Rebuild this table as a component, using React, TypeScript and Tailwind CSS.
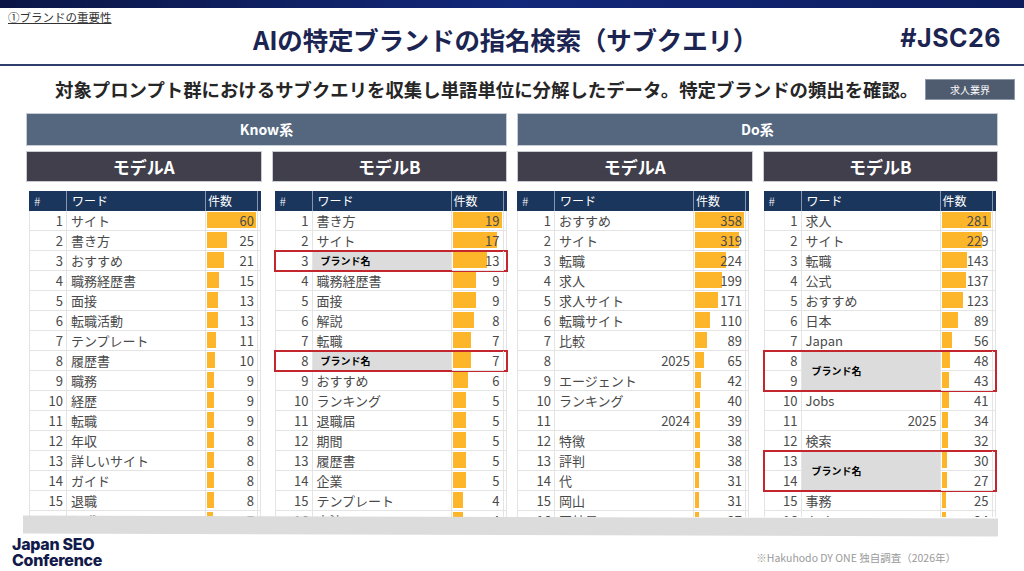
import React from 'react';

type Row = { n: number; w: string; v: number; kind?: 'num' | 'brand' | 'brand2' | 'skip' };

interface TableData {
  max: number;
  rows: Row[];
}

const knowA: TableData = {
  max: 60,
  rows: [
    { n: 1, w: 'サイト', v: 60 },
    { n: 2, w: '書き方', v: 25 },
    { n: 3, w: 'おすすめ', v: 21 },
    { n: 4, w: '職務経歴書', v: 15 },
    { n: 5, w: '面接', v: 13 },
    { n: 6, w: '転職活動', v: 13 },
    { n: 7, w: 'テンプレート', v: 11 },
    { n: 8, w: '履歴書', v: 10 },
    { n: 9, w: '職務', v: 9 },
    { n: 10, w: '経歴', v: 9 },
    { n: 11, w: '転職', v: 9 },
    { n: 12, w: '年収', v: 8 },
    { n: 13, w: '詳しいサイト', v: 8 },
    { n: 14, w: 'ガイド', v: 8 },
    { n: 15, w: '退職', v: 8 },
    { n: 16, w: '退職願', v: 7 },
  ],
};

const knowB: TableData = {
  max: 19,
  rows: [
    { n: 1, w: '書き方', v: 19 },
    { n: 2, w: 'サイト', v: 17 },
    { n: 3, w: 'ブランド名', v: 13, kind: 'brand' },
    { n: 4, w: '職務経歴書', v: 9 },
    { n: 5, w: '面接', v: 9 },
    { n: 6, w: '解説', v: 8 },
    { n: 7, w: '転職', v: 7 },
    { n: 8, w: 'ブランド名', v: 7, kind: 'brand' },
    { n: 9, w: 'おすすめ', v: 6 },
    { n: 10, w: 'ランキング', v: 5 },
    { n: 11, w: '退職届', v: 5 },
    { n: 12, w: '期間', v: 5 },
    { n: 13, w: '履歴書', v: 5 },
    { n: 14, w: '企業', v: 5 },
    { n: 15, w: 'テンプレート', v: 4 },
    { n: 16, w: '方法', v: 4 },
  ],
};

const doA: TableData = {
  max: 358,
  rows: [
    { n: 1, w: 'おすすめ', v: 358 },
    { n: 2, w: 'サイト', v: 319 },
    { n: 3, w: '転職', v: 224 },
    { n: 4, w: '求人', v: 199 },
    { n: 5, w: '求人サイト', v: 171 },
    { n: 6, w: '転職サイト', v: 110 },
    { n: 7, w: '比較', v: 89 },
    { n: 8, w: '2025', v: 65, kind: 'num' },
    { n: 9, w: 'エージェント', v: 42 },
    { n: 10, w: 'ランキング', v: 40 },
    { n: 11, w: '2024', v: 39, kind: 'num' },
    { n: 12, w: '特徴', v: 38 },
    { n: 13, w: '評判', v: 38 },
    { n: 14, w: '代', v: 31 },
    { n: 15, w: '岡山', v: 31 },
    { n: 16, w: '正社員', v: 27 },
  ],
};

const doB: TableData = {
  max: 281,
  rows: [
    { n: 1, w: '求人', v: 281 },
    { n: 2, w: 'サイト', v: 229 },
    { n: 3, w: '転職', v: 143 },
    { n: 4, w: '公式', v: 137 },
    { n: 5, w: 'おすすめ', v: 123 },
    { n: 6, w: '日本', v: 89 },
    { n: 7, w: 'Japan', v: 56 },
    { n: 8, w: 'ブランド名', v: 48, kind: 'brand2' },
    { n: 9, w: '', v: 43, kind: 'skip' },
    { n: 10, w: 'Jobs', v: 41 },
    { n: 11, w: '2025', v: 34, kind: 'num' },
    { n: 12, w: '検索', v: 32 },
    { n: 13, w: 'ブランド名', v: 30, kind: 'brand2' },
    { n: 14, w: '', v: 27, kind: 'skip' },
    { n: 15, w: '事務', v: 25 },
    { n: 16, w: 'doda', v: 24 },
  ],
};

function NumCell({ n }: { n: number }) {
  return (
    <div className="w-[38px] h-[20px] border-l border-r border-b border-[#e4e4e4] flex items-center justify-end pr-[3px]">
      {n}
    </div>
  );
}

function CountCell({ v, max }: { v: number; max: number }) {
  return (
    <div className="relative w-[52px] h-[20px] border-r border-b border-[#e4e4e4] flex items-center justify-end pr-[3px]">
      <div
        className="absolute left-[1px] top-[1px] bottom-[2px] bg-[#fdb62a]"
        style={{ width: `${Math.max(4, Math.round((v / max) * 49))}px` }}
      />
      <span className="relative">{v}</span>
    </div>
  );
}

function EndCell() {
  return <div className="w-[3px] h-[20px] border-r border-b border-[#e4e4e4]" />;
}

function DataTable({ data }: { data: TableData }) {
  const out: React.ReactNode[] = [];
  data.rows.forEach((r, i) => {
    if (r.kind === 'skip') return;
    if (r.kind === 'brand2') {
      const r2 = data.rows[i + 1];
      out.push(
        <div key={r.n} className="relative z-10 flex h-[40px] outline-2 outline-[#c3262c] -outline-offset-1">
          <div className="flex flex-col">
            <NumCell n={r.n} />
            <NumCell n={r2.n} />
          </div>
          <div className="w-[139px] h-[40px] bg-[#dcdcdc] border-r border-b border-[#e4e4e4] flex items-center pl-[10px] text-[10px] font-bold text-black">
            {r.w}
          </div>
          <div className="flex flex-col">
            <CountCell v={r.v} max={data.max} />
            <CountCell v={r2.v} max={data.max} />
          </div>
          <div className="flex flex-col">
            <EndCell />
            <EndCell />
          </div>
        </div>
      );
      return;
    }
    const brand = r.kind === 'brand';
    out.push(
      <div
        key={r.n}
        className={`flex h-[20px] ${brand ? 'relative z-10 outline-2 outline-[#c3262c] -outline-offset-1' : ''}`}
      >
        <NumCell n={r.n} />
        <div
          className={`w-[139px] h-[20px] border-r border-b border-[#e4e4e4] flex items-center ${
            brand
              ? 'bg-[#dcdcdc] pl-[8px] text-[10px] font-bold text-black'
              : r.kind === 'num'
              ? 'justify-end pr-[3px]'
              : 'pl-[4px]'
          }`}
        >
          {r.w}
        </div>
        <CountCell v={r.v} max={data.max} />
        <EndCell />
      </div>
    );
  });

  return (
    <div className="w-[232px] text-[13px] leading-none text-[#4a4a4a]">
      <div className="flex h-[20px] bg-[#1b365d] text-white text-[12px]">
        <div className="w-[38px] pl-[5px] border-r border-[#8597b0] flex items-center font-light">#</div>
        <div className="w-[139px] pl-[5px] border-r border-[#8597b0] flex items-center">ワード</div>
        <div className="w-[52px] pl-[2px] border-r border-[#8597b0] flex items-center">件数</div>
        <div className="w-[3px]" />
      </div>
      {out}
    </div>
  );
}

function ModelHeader({ label }: { label: string }) {
  return (
    <div className="h-[31px] bg-[#413f4c] border border-[#c9ccd3] flex items-center justify-center text-white text-[17px] font-bold">
      {label}
    </div>
  );
}

export default function App() {
  const columns = [
    { label: 'モデルA', data: knowA, pad: 'pl-[3px]' },
    { label: 'モデルB', data: knowB, pad: 'pl-[3px]' },
    { label: 'モデルA', data: doA, pad: 'pl-[0px]' },
    { label: 'モデルB', data: doB, pad: 'pl-[1px]' },
  ];

  return (
    <div className="w-[1024px] h-[571px] overflow-hidden bg-white font-['Noto_Sans_CJK_JP','Noto_Sans',sans-serif]">
      {/* Top strip */}
      <div className="h-[8px] bg-linear-to-r from-[#0b1646] via-[#12287a] to-[#0d1d5e]" />

      {/* Title block */}
      <div className="h-[56px]">
        <div className="pl-[8px] pt-[3px] text-[11.5px] leading-[13px] text-[#333] underline">①ブランドの重要性</div>
        <div className="flex items-center justify-between pl-[253px] pr-[23px] h-[30px]">
          <h1 className="text-[25.5px] font-bold text-[#1c2452] tracking-[-0.2px]">AIの特定ブランドの指名検索（サブクエリ）</h1>
          <div className="text-[25px] font-bold text-[#1c2452] font-['Inter',sans-serif] tracking-[0.5px]">#JSC26</div>
        </div>
      </div>
      <div className="h-[2px] bg-[#2f3d6a]" />

      {/* Subtitle */}
      <div className="h-[47px] flex items-center justify-between pl-[55px] pr-[9px]">
        <p className="whitespace-nowrap text-[18.4px] font-bold text-[#262626]">
          対象プロンプト群におけるサブクエリを収集し単語単位に分解したデータ。特定ブランドの頻出を確認。
        </p>
        <div className="w-[90px] h-[21px] bg-[#4f5c6f] border border-[#8e98a8] flex items-center justify-center text-white text-[10px]">
          求人業界
        </div>
      </div>

      {/* Tables */}
      <div className="px-[26px]">
        <div className="grid grid-cols-2 gap-x-[10px]">
          <div className="h-[33px] bg-[#54677f] border border-[#c5ccd6] flex items-center justify-center text-white text-[14px] font-bold">
            Know系
          </div>
          <div className="h-[33px] bg-[#54677f] border border-[#c5ccd6] flex items-center justify-center text-white text-[14px] font-bold">
            Do系
          </div>
        </div>
        <div className="grid grid-cols-4 gap-x-[10px] mt-[5px]">
          {columns.map((c, i) => (
            <ModelHeader key={i} label={c.label} />
          ))}
        </div>
        <div className="grid grid-cols-4 gap-x-[10px] mt-[9px] h-[326px] overflow-hidden">
          {columns.map((c, i) => (
            <div key={i} className={c.pad}>
              <DataTable data={c.data} />
            </div>
          ))}
        </div>
      </div>

      {/* Cut-off band */}
      <div className="ml-[23px] w-[975px] h-[18px] bg-[#dcdcdc] rotate-[0.18deg]" />

      {/* Footer */}
      <div className="flex items-start justify-between pl-[12px] pr-[68px] pt-[1px]">
        <div className="font-['Inter',sans-serif] font-extrabold text-[16px] leading-[16px] text-[#111a4a] tracking-[-0.3px]">
          <div>Japan SEO</div>
          <div>Conference</div>
        </div>
        <div className="mt-[14px] text-[10.5px] text-[#9a9a9a]">※Hakuhodo DY ONE 独自調査（2026年）</div>
      </div>
    </div>
  );
}
